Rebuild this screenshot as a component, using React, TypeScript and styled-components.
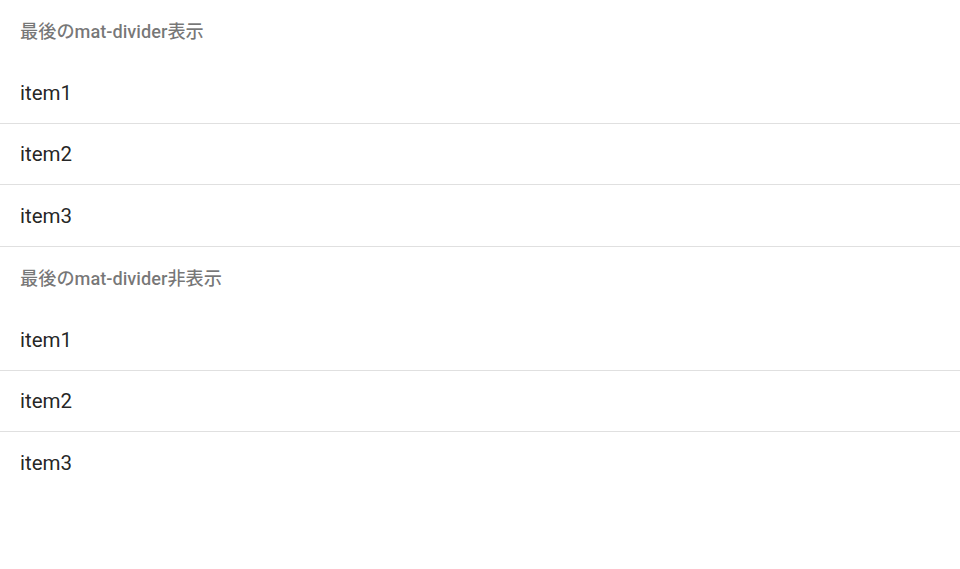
import styled, { createGlobalStyle } from 'styled-components';

const GlobalStyle = createGlobalStyle`
  body {
    margin: 0;
    background: #fff;
    font-family: Roboto, "Noto Sans CJK JP", sans-serif;
  }
`;

const sections = [
  { title: '最後のmat-divider表示', items: ['item1', 'item2', 'item3'], lastDivider: true },
  { title: '最後のmat-divider非表示', items: ['item1', 'item2', 'item3'], lastDivider: false },
];

const List = styled.div`
  display: flex;
  flex-direction: column;
`;

const SubHeader = styled.h3`
  margin: 0;
  box-sizing: border-box;
  height: 61.75px;
  display: flex;
  align-items: center;
  padding: 0 20px 2px;
  font-size: 18.2px;
  font-weight: 500;
  color: rgba(0, 0, 0, 0.54);
`;

const Item = styled.div<{ divider: boolean }>`
  box-sizing: border-box;
  height: 61.75px;
  display: flex;
  align-items: center;
  padding: 1px 20px 0;
  font-size: 20.5px;
  color: rgba(0, 0, 0, 0.87);
  border-bottom: 1px solid ${(p) => (p.divider ? 'rgba(0, 0, 0, 0.12)' : 'transparent')};
`;

const App = () => {
  return (
    <>
      <GlobalStyle />
      {sections.map((s, si) => (
        <List key={si}>
          <SubHeader>{s.title}</SubHeader>
          {s.items.map((it, i) => (
            <Item key={it} divider={i < s.items.length - 1 || s.lastDivider}>
              {it}
            </Item>
          ))}
        </List>
      ))}
    </>
  );
};

export default App;
